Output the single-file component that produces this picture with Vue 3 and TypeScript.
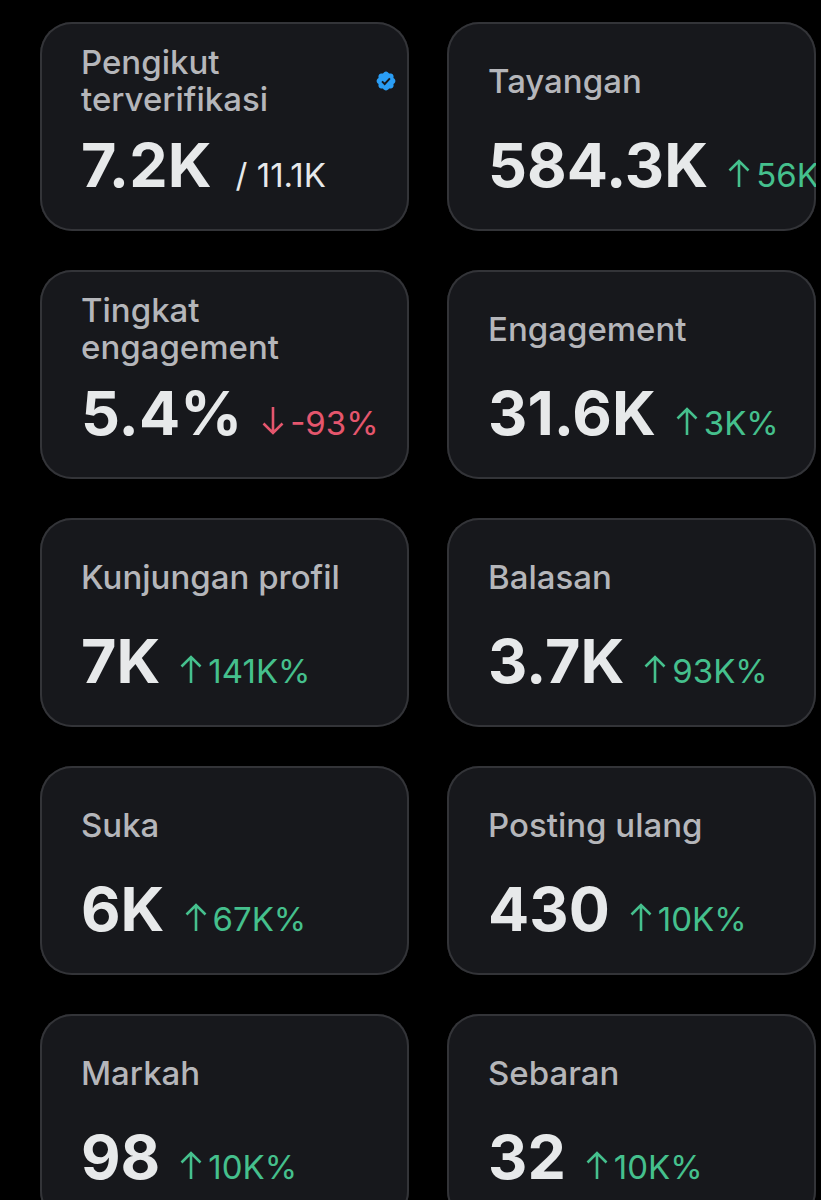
<script setup lang="ts">
interface Metric {
  label: string
  value: string
  total?: string
  change?: string
  direction?: 'up' | 'down'
  verified?: boolean
}

const metrics: Metric[] = [
  { label: 'Pengikut terverifikasi', value: '7.2K', total: '/ 11.1K', verified: true },
  { label: 'Tayangan', value: '584.3K', change: '56K%', direction: 'up' },
  { label: 'Tingkat engagement', value: '5.4%', change: '-93%', direction: 'down' },
  { label: 'Engagement', value: '31.6K', change: '3K%', direction: 'up' },
  { label: 'Kunjungan profil', value: '7K', change: '141K%', direction: 'up' },
  { label: 'Balasan', value: '3.7K', change: '93K%', direction: 'up' },
  { label: 'Suka', value: '6K', change: '67K%', direction: 'up' },
  { label: 'Posting ulang', value: '430', change: '10K%', direction: 'up' },
  { label: 'Markah', value: '98', change: '10K%', direction: 'up' },
  { label: 'Sebaran', value: '32', change: '10K%', direction: 'up' },
]
</script>

<template>
  <main class="page">
    <section v-for="metric in metrics" :key="metric.label" class="card">
      <div class="head">
        <h2 class="label">{{ metric.label }}</h2>
        <svg v-if="metric.verified" class="badge" viewBox="0 0 22 22" aria-hidden="true">
          <path
            fill="#2a9df4"
            d="M20.396 11c-.018-.646-.215-1.275-.57-1.816-.354-.54-.852-.972-1.438-1.246.223-.607.27-1.264.14-1.897-.131-.634-.437-1.218-.882-1.687-.47-.445-1.053-.75-1.687-.882-.633-.13-1.29-.083-1.897.14-.273-.587-.704-1.086-1.245-1.44S11.647 1.62 11 1.604c-.646.017-1.273.213-1.813.568s-.969.854-1.24 1.44c-.608-.223-1.267-.272-1.902-.14-.635.13-1.22.436-1.69.882-.445.47-.749 1.055-.878 1.688-.13.633-.08 1.29.144 1.896-.587.274-1.087.705-1.443 1.245-.356.54-.555 1.17-.574 1.817.02.647.218 1.276.574 1.817.356.54.856.972 1.443 1.245-.224.606-.274 1.263-.144 1.896.13.634.433 1.218.877 1.688.47.443 1.054.747 1.687.878.633.132 1.29.084 1.897-.136.274.586.705 1.084 1.246 1.439.54.354 1.17.551 1.816.569.647-.016 1.276-.213 1.817-.567s.972-.854 1.245-1.44c.604.239 1.266.296 1.903.164.636-.132 1.22-.447 1.68-.907.46-.46.776-1.044.908-1.681s.075-1.299-.165-1.903c.586-.274 1.084-.705 1.439-1.246.354-.54.551-1.17.569-1.816z"
          />
          <path fill="none" stroke="#16181c" stroke-width="1.9" d="M7 11.3l2.7 2.7 5.2-5.7" />
        </svg>
      </div>
      <p class="figures">
        <span class="value">{{ metric.value }}</span>
        <span v-if="metric.total" class="total">{{ metric.total }}</span>
        <span v-if="metric.change" class="change" :class="metric.direction">
          <svg class="arrow" viewBox="0 0 22 28" aria-hidden="true">
            <path
              v-if="metric.direction === 'up'"
              d="M11 28V2M1.5 11.5L11 2l9.5 9.5"
            />
            <path v-else d="M11 0v26M1.5 16.5L11 26l9.5-9.5" />
          </svg>
          {{ metric.change }}
        </span>
      </p>
    </section>
  </main>
</template>

<style>
body {
  margin: 0;
  background: #000;
}
</style>

<style scoped>
.page {
  box-sizing: border-box;
  height: 100vh;
  overflow: hidden;
  display: grid;
  grid-template-columns: repeat(2, minmax(0, 1fr));
  grid-auto-rows: max-content;
  align-content: start;
  gap: 39px 38px;
  padding: 22px 5px 0 40px;
  background: #000;
  font-family: Inter, 'Liberation Sans', sans-serif;
}

.card {
  box-sizing: border-box;
  overflow: hidden;
  padding: 22px 12px 28px 41px;
  border-radius: 32px;
  background: #17181c;
  box-shadow: inset 0 0 0 2px #333438;
}

.head {
  display: flex;
  align-items: center;
  justify-content: space-between;
  gap: 8px;
  height: 74px;
}

.label {
  max-width: 280px;
  margin: 0;
  color: #b5b6ba;
  font-size: 33px;
  font-weight: 500;
  line-height: 37px;
}

.badge {
  flex: none;
  width: 22px;
  height: 22px;
}

.figures {
  display: flex;
  align-items: baseline;
  gap: 20px;
  margin: 9px 0 0;
  white-space: nowrap;
}

.value {
  color: #e7e9ea;
  font-size: 61px;
  font-weight: 700;
  line-height: 76px;
}

.total,
.change {
  font-size: 33px;
  font-weight: 400;
  line-height: 37px;
}

.total {
  margin-left: 4px;
  color: #e7e9ea;
}

.change {
  display: flex;
  align-items: baseline;
  gap: 6px;
}

.up {
  color: #45c08d;
}

.down {
  color: #e5566d;
}

.arrow {
  flex: none;
  width: 22px;
  height: 28px;
  fill: none;
  stroke: currentColor;
  stroke-width: 2.6;
}
</style>
